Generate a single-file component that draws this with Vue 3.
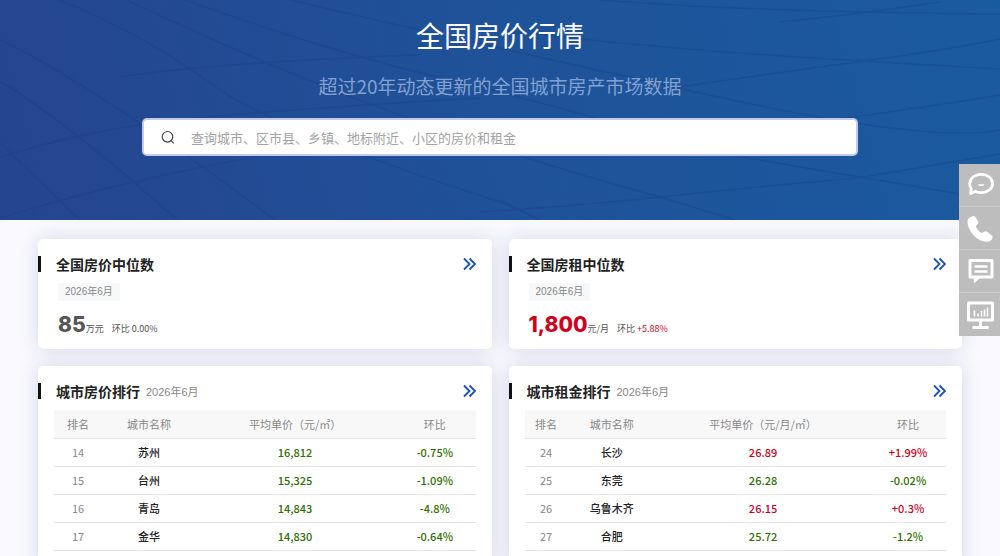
<template>
  <div class="page">
    <header class="hero">
      <svg class="hero-lines" viewBox="0 0 1000 220" preserveAspectRatio="xMidYMid slice" aria-hidden="true">
        <path d="M0 40Q90 82 275 220" />
        <path d="M60 0Q150 38 210 83T500 202L540 220" />
        <path d="M0 81Q70 124 177 220" />
        <path d="M0 143L80 220" />
        <path d="M127 0Q270 68 400 115T660 197L735 220" />
        <path d="M185 0Q330 52 450 80T700 150L960 194" />
        <path d="M290 0Q470 42 700 93T1000 130" />
        <path d="M500 30Q600 42 700 50T1000 69" />
        <path d="M600 0Q750 12 1000 14" />
        <path d="M0 218Q90 190 207 166T500 118" />
        <path d="M0 157Q80 132 160 122T480 98" />
        <path d="M120 77Q220 62 420 55" />
        <path d="M480 212Q600 204 660 197T857 178L1000 154" />
        <path d="M660 90Q760 75 857 62T1000 39" />
        <path d="M750 130Q800 124 860 116T1000 95" />
        <path d="M780 22Q860 14 940 2" />
        <path d="M500 200L540 220" />
      </svg>
      <div class="hero-content">
        <h1>全国房价行情</h1>
        <p class="subtitle">超过20年动态更新的全国城市房产市场数据</p>
        <form class="search" role="search" @submit.prevent>
          <button type="submit" class="search-btn" aria-label="搜索">
            <svg viewBox="0 0 14 14" aria-hidden="true">
              <circle cx="6.5" cy="6.8" r="5.3" />
              <path d="M10.200 10.800l2.600 2.600" />
            </svg>
          </button>
          <input
            v-model="keyword"
            type="text"
            aria-label="查询房价"
            placeholder="查询城市、区市县、乡镇、地标附近、小区的房价和租金"
          />
        </form>
      </div>
    </header>

    <main class="cards">
      <section v-for="item in medians" :key="item.title" class="card median">
        <div class="card-head">
          <h2>{{ item.title }}</h2>
          <a href="#" class="more" :aria-label="item.title">
            <svg viewBox="0 0 14 14" aria-hidden="true"><path d="M2 1.500L7.500 7 2 12.500M7.500 1.500L13 7l-5.500 5.500" /></svg>
          </a>
        </div>
        <div class="tag">2026年6月</div>
        <p class="value">
          <strong :class="{ up: item.up }">{{ item.value }}</strong>
          <span>{{ item.unit }}</span>
          <span class="ratio">环比 <em :class="{ up: item.up }">{{ item.ratio }}</em></span>
        </p>
      </section>

      <section v-for="rank in rankings" :key="rank.title" class="card">
        <div class="card-head">
          <h2>{{ rank.title }}</h2>
          <span class="date">2026年6月</span>
          <a href="#" class="more" :aria-label="rank.title">
            <svg viewBox="0 0 14 14" aria-hidden="true"><path d="M2 1.500L7.500 7 2 12.500M7.500 1.500L13 7l-5.500 5.500" /></svg>
          </a>
        </div>
        <table :class="rank.type">
          <thead>
            <tr>
              <th class="col-no">排名</th>
              <th class="col-city">城市名称</th>
              <th class="col-price">{{ rank.priceLabel }}</th>
              <th>环比</th>
            </tr>
          </thead>
          <tbody>
            <tr v-for="row in rank.rows" :key="row.no">
              <td class="no">{{ row.no }}</td>
              <td class="city">{{ row.city }}</td>
              <td :class="trend(row)">{{ row.price }}</td>
              <td :class="trend(row)">{{ row.ratio }}</td>
            </tr>
          </tbody>
        </table>
      </section>
    </main>

    <aside class="toolbar">
      <button type="button" aria-label="在线咨询">
        <svg viewBox="0 0 28 28" aria-hidden="true">
          <path class="line" d="M5.200 17.800A11 9 0 0 1 3.800 12.500C3.800 7.400 8.800 3.300 15.200 3.300S26.600 7.400 26.600 12.500 21.600 21.700 15.200 21.700c-2.200 0-4.200-.5-6-1.300L4.600 22.500z" />
          <path d="M12 13.200h6.500a3.300 2.600 0 0 1-6.500 0z" />
        </svg>
      </button>
      <button type="button" aria-label="电话">
        <svg viewBox="0 -1 28 28" aria-hidden="true">
          <path d="M5.200 1.800L7.500 1q1-.2 1.700.8l3 4.700q.8 1.400-.4 2.500l-2 1.900q1 4.600 6 7.200l3-1.700q1.300-.7 2.400.4l4.800 3.900q1 .9.400 2.200-1.300 3.800-5 3.800C12 27.200 1.500 16.500 1.500 6.500q0-3.300 3.700-4.700z" />
        </svg>
      </button>
      <button type="button" aria-label="留言">
        <svg viewBox="0 0 28 28" aria-hidden="true">
          <path class="line box" d="M4 3.500h22v16.500H4z" />
          <path d="M7.500 20H15l-7 6.500z" />
          <path class="line thin" d="M8.500 9.500h13M8.500 14.500h13" />
        </svg>
      </button>
      <button type="button" aria-label="数据大屏">
        <svg viewBox="0 0 28 28" aria-hidden="true">
          <path class="line box" d="M2.500 2h24v17h-24z" />
          <path class="line bars" d="M8.500 15.500V9.500M12 15.500v-3M15.500 15.500V10M18.500 15.500V8.500M21.500 15.500V6.500" />
          <path class="line box" d="M14.500 19v7M7.500 26.500h14" />
        </svg>
      </button>
    </aside>
  </div>
</template>

<script setup>
import { ref } from "vue";

const keyword = ref("");

// 中位数
const medians = [
  { title: "全国房价中位数", value: "85", unit: "万元", ratio: "0.00%", up: false },
  { title: "全国房租中位数", value: "1,800", unit: "元/月", ratio: "+5.88%", up: true },
];

// 排行
const rankings = [
  {
    title: "城市房价排行",
    type: "sale",
    priceLabel: "平均单价（元/㎡）",
    rows: [
      { no: 14, city: "苏州", price: "16,812", ratio: "-0.75%" },
      { no: 15, city: "台州", price: "15,325", ratio: "-1.09%" },
      { no: 16, city: "青岛", price: "14,843", ratio: "-4.8%" },
      { no: 17, city: "金华", price: "14,830", ratio: "-0.64%" },
    ],
  },
  {
    title: "城市租金排行",
    type: "rent",
    priceLabel: "平均单价（元/月/㎡）",
    rows: [
      { no: 24, city: "长沙", price: "26.89", ratio: "+1.99%" },
      { no: 25, city: "东莞", price: "26.28", ratio: "-0.02%" },
      { no: 26, city: "乌鲁木齐", price: "26.15", ratio: "+0.3%" },
      { no: 27, city: "合肥", price: "25.72", ratio: "-1.2%" },
    ],
  },
];

const trend = (row) => (row.ratio.startsWith("+") ? "up" : "down");
</script>

<style>
body {
  margin: 0;
  background: #f9f9fe;
}
</style>

<style scoped>
.page {
  display: flex;
  flex-direction: column;
  height: 100vh;
  overflow: hidden;
  font-family: "Noto Sans CJK SC", sans-serif;
  font-size: 11px;
  color: #222;
}

h1,
h2,
p {
  margin: 0;
}

.hero {
  position: relative;
  flex-shrink: 0;
  background: linear-gradient(75deg, #26448f 0%, #1f5198 45%, #1a5a9f 100%);
}

.hero-lines {
  position: absolute;
  inset: 0;
  width: 100%;
  height: 100%;
  fill: none;
  stroke: #183c82;
  stroke-width: 1.5;
  opacity: 0.28;
}

.hero-content {
  position: relative;
  display: flex;
  flex-direction: column;
  align-items: center;
  padding: 14px 0 64px;
}

h1 {
  font-size: 28px;
  line-height: 42px;
  font-weight: 400;
  color: #fff;
}

.subtitle {
  margin-top: 16px;
  font-size: 19px;
  line-height: 28px;
  color: #83a1d0;
}

.search {
  display: flex;
  align-items: center;
  box-sizing: border-box;
  width: 71.6%;
  height: 38px;
  margin-top: 18px;
  padding-left: 17px;
  border: 2px solid #c3cbe8;
  border-radius: 5px;
  background: #fff;
}

.search-btn {
  display: flex;
  padding: 0;
  border: 0;
  background: none;
  cursor: pointer;
}

.search-btn svg {
  width: 14px;
  height: 14px;
  fill: none;
  stroke: #444;
  stroke-width: 1.2;
}

.search input {
  flex: 1;
  min-width: 0;
  padding: 0 16px;
  border: 0;
  outline: 0;
  background: none;
  font-family: inherit;
  font-size: 13px;
}

.search input::placeholder {
  color: #a3a3a3;
}

.cards {
  flex: 1;
  display: grid;
  grid-template-columns: 1fr 1fr;
  grid-template-rows: auto auto;
  gap: 17px;
  padding: 19px 38px 0;
}

.card {
  box-sizing: border-box;
  min-width: 0;
  padding: 13px 16px 20px;
  border-radius: 5px;
  background: #fff;
  box-shadow: 0 0 20px rgba(50, 65, 125, 0.18);
}

.median {
  padding-bottom: 9px;
}

.card-head {
  display: flex;
  align-items: center;
  height: 23px;
}

.card-head h2 {
  margin-left: -16px;
  padding-left: 15px;
  border-left: 3px solid #111;
  font-size: 14px;
  line-height: 16px;
  font-weight: 700;
}

.date {
  margin-left: 6px;
  font-family: "Liberation Sans", "Noto Sans CJK SC", sans-serif;
  color: #888;
}

.more {
  margin-left: auto;
}

.more svg {
  display: block;
  width: 14px;
  height: 14px;
  fill: none;
  stroke: #1850bd;
  stroke-width: 1.8;
}

.tag {
  width: fit-content;
  margin: 8px 0 0 4px;
  padding: 0 7px;
  background: #f7f8fa;
  font-family: "Liberation Sans", "Noto Sans CJK SC", sans-serif;
  font-size: 10px;
  line-height: 18px;
  color: #888;
}

.value {
  display: flex;
  align-items: baseline;
  height: 30px;
  margin: 9px 0 0 4px;
  font-size: 9px;
  line-height: 30px;
  color: #555;
}

.value strong {
  font-family: Inter, sans-serif;
  font-size: 21px;
  font-weight: 800;
}

.value em {
  font-style: normal;
}

.value .ratio {
  margin-left: 8px;
}

.value .up,
td.up {
  color: #d0021b;
}

td.down {
  color: #2f7000;
}

table {
  width: 100%;
  margin-top: 8px;
  border-collapse: collapse;
  table-layout: fixed;
  text-align: center;
}

th,
td {
  box-sizing: border-box;
  height: 28px;
  padding: 0;
  border-bottom: 1px solid #e6e6e6;
  line-height: 16px;
  white-space: nowrap;
}

th {
  background: #f8f8f8;
  font-weight: 400;
  color: #888;
}

td {
  font-weight: 500;
}

td.no {
  font-weight: 400;
  color: #888;
}

.sale .col-no {
  width: 11.4%;
}

.sale .col-city {
  width: 22.3%;
}

.sale .col-price {
  width: 47%;
}

.rent .col-no {
  width: 10.2%;
}

.rent .col-city {
  width: 21%;
}

.rent .col-price {
  width: 50.8%;
}

.toolbar {
  position: fixed;
  top: 164px;
  right: 0;
  width: 41px;
}

.toolbar button {
  display: flex;
  align-items: center;
  justify-content: center;
  width: 100%;
  height: 43px;
  padding: 0;
  border: 0;
  border-bottom: 1px solid #cbcbcb;
  background: #bdbdbd;
  cursor: pointer;
}

.toolbar button:last-child {
  border-bottom: 0;
}

.toolbar svg {
  width: 28px;
  height: 28px;
  fill: #fff;
}

.toolbar .line {
  fill: none;
  stroke: #fff;
  stroke-width: 2.8;
  stroke-linejoin: round;
  stroke-linecap: round;
}

.toolbar .box {
  stroke-width: 3;
}

.toolbar .thin {
  stroke-width: 2.5;
  stroke-linecap: butt;
}

.toolbar .bars {
  stroke-width: 1.6;
  stroke-linecap: butt;
}
</style>
